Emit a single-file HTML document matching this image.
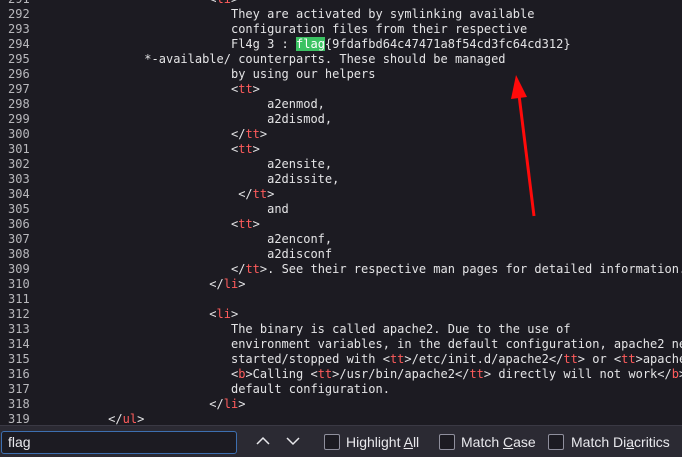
<!DOCTYPE html>
<html><head><style>
html,body{margin:0;padding:0;width:682px;height:456px;overflow:hidden;background:#1c1b22;}
#code{position:absolute;left:0;top:-8px;width:682px;height:440px;overflow:hidden;font-family:"DejaVu Sans Mono",monospace;font-size:12px;line-height:15px;color:#e4e4e6;white-space:pre;}
.ln{position:absolute;left:8px;color:#b8b8bc;}
.tx{position:absolute;left:57.6px;}
.r{color:#ff5c5c;}
.hl{background:#3ac262;color:#fff;}
#bar{position:absolute;left:0;top:425px;width:682px;height:31px;background:#2b2a33;border-top:1px solid #3a3944;font-family:"Liberation Sans",sans-serif;font-size:14px;color:#e8e8ec;white-space:nowrap;}
#inp{position:absolute;left:1px;top:5px;width:236px;height:23px;border:1px solid #3d6fb0;border-radius:3px;background:#1c1b22;box-sizing:border-box;padding-left:6px;line-height:21px;}
.cb{position:absolute;top:8px;width:14px;height:14px;border:1px solid #8f8f9d;border-radius:2px;background:#1c1b22;}
.lab{position:absolute;top:8px;line-height:16px;}
</style></head><body>
<div id="code">
<div class="ln" style="top:0">291</div><div class="tx" style="top:0">                     &lt;<span class="r">li</span>&gt;</div>
<div class="ln" style="top:15px">292</div><div class="tx" style="top:15px">                        They are activated by symlinking available</div>
<div class="ln" style="top:30px">293</div><div class="tx" style="top:30px">                        configuration files from their respective</div>
<div class="ln" style="top:45px">294</div><div class="tx" style="top:45px">                        Fl4g 3 : <span class="hl">flag</span>{9fdafbd64c47471a8f54cd3fc64cd312}</div>
<div class="ln" style="top:60px">295</div><div class="tx" style="top:60px">            *-available/ counterparts. These should be managed</div>
<div class="ln" style="top:75px">296</div><div class="tx" style="top:75px">                        by using our helpers</div>
<div class="ln" style="top:90px">297</div><div class="tx" style="top:90px">                        &lt;<span class="r">tt</span>&gt;</div>
<div class="ln" style="top:105px">298</div><div class="tx" style="top:105px">                             a2enmod,</div>
<div class="ln" style="top:120px">299</div><div class="tx" style="top:120px">                             a2dismod,</div>
<div class="ln" style="top:135px">300</div><div class="tx" style="top:135px">                        &lt;/<span class="r">tt</span>&gt;</div>
<div class="ln" style="top:150px">301</div><div class="tx" style="top:150px">                        &lt;<span class="r">tt</span>&gt;</div>
<div class="ln" style="top:165px">302</div><div class="tx" style="top:165px">                             a2ensite,</div>
<div class="ln" style="top:180px">303</div><div class="tx" style="top:180px">                             a2dissite,</div>
<div class="ln" style="top:195px">304</div><div class="tx" style="top:195px">                         &lt;/<span class="r">tt</span>&gt;</div>
<div class="ln" style="top:210px">305</div><div class="tx" style="top:210px">                             and</div>
<div class="ln" style="top:225px">306</div><div class="tx" style="top:225px">                        &lt;<span class="r">tt</span>&gt;</div>
<div class="ln" style="top:240px">307</div><div class="tx" style="top:240px">                             a2enconf,</div>
<div class="ln" style="top:255px">308</div><div class="tx" style="top:255px">                             a2disconf</div>
<div class="ln" style="top:270px">309</div><div class="tx" style="top:270px">                        &lt;/<span class="r">tt</span>&gt;. See their respective man pages for detailed information.</div>
<div class="ln" style="top:285px">310</div><div class="tx" style="top:285px">                     &lt;/<span class="r">li</span>&gt;</div>
<div class="ln" style="top:300px">311</div>
<div class="ln" style="top:315px">312</div><div class="tx" style="top:315px">                     &lt;<span class="r">li</span>&gt;</div>
<div class="ln" style="top:330px">313</div><div class="tx" style="top:330px">                        The binary is called apache2. Due to the use of</div>
<div class="ln" style="top:345px">314</div><div class="tx" style="top:345px">                        environment variables, in the default configuration, apache2 ne</div>
<div class="ln" style="top:360px">315</div><div class="tx" style="top:360px">                        started/stopped with &lt;<span class="r">tt</span>&gt;/etc/init.d/apache2&lt;/<span class="r">tt</span>&gt; or &lt;<span class="r">tt</span>&gt;apache</div>
<div class="ln" style="top:375px">316</div><div class="tx" style="top:375px">                        &lt;<span class="r">b</span>&gt;Calling &lt;<span class="r">tt</span>&gt;/usr/bin/apache2&lt;/<span class="r">tt</span>&gt; directly will not work&lt;/<span class="r">b</span>&gt;</div>
<div class="ln" style="top:390px">317</div><div class="tx" style="top:390px">                        default configuration.</div>
<div class="ln" style="top:405px">318</div><div class="tx" style="top:405px">                     &lt;/<span class="r">li</span>&gt;</div>
<div class="ln" style="top:420px">319</div><div class="tx" style="top:420px">       &lt;/<span class="r">ul</span>&gt;</div>
</div>
<svg style="position:absolute;left:0;top:0" width="682" height="456">
<line x1="534" y1="216" x2="519" y2="95" stroke="#ff0a0a" stroke-width="3"/>
<polygon points="516,75 511,99 527,97" fill="#ff0a0a"/>
</svg>
<div id="bar">
<div id="inp">flag</div>
<svg style="position:absolute;left:255px;top:8px" width="50" height="14"><polyline points="2,10 8,4 14,10" fill="none" stroke="#e8e8ec" stroke-width="1.5"/><polyline points="32,4 38,10 44,4" fill="none" stroke="#e8e8ec" stroke-width="1.5"/></svg>
<div class="cb" style="left:324px"></div><div class="lab" style="left:346px">Highlight <u>A</u>ll</div>
<div class="cb" style="left:439px"></div><div class="lab" style="left:461px">Match <u>C</u>ase</div>
<div class="cb" style="left:548px"></div><div class="lab" style="left:571px">Match Di<u>a</u>critics</div>
</div>
</body></html>
